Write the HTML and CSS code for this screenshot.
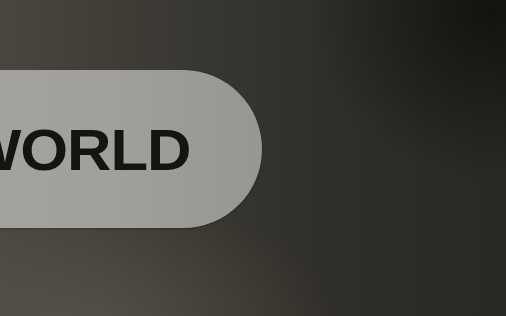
FILE: index.html
```html
<!DOCTYPE html>
<html>
<head>
<meta charset="utf-8">
<link rel="stylesheet" href="styles.css">
</head>
<body>
<div class="stage">
  <div class="pill"><span class="word">WORLD</span></div>
</div>
</body>
</html>
```
FILE: styles.css
```css
html, body {
  margin: 0;
  padding: 0;
  width: 506px;
  height: 316px;
  overflow: hidden;
}
body {
  background:
    radial-gradient(ellipse 180px 170px at 490px 10px, rgba(14,13,11,0.8), rgba(14,13,11,0) 100%),
    radial-gradient(ellipse 260px 140px at 80px 330px, rgba(95,90,80,0.65), rgba(95,90,80,0) 100%),
    linear-gradient(90deg, #48463f 0%, #3a3832 35%, #302e29 65%, #2a2823 100%);
}
.stage {
  display: flex;
  padding-top: 70px;
}
.pill {
  display: flex;
  align-items: center;
  justify-content: flex-end;
  box-sizing: border-box;
  width: 362px;
  height: 158px;
  margin-left: -100px;
  padding-right: 72px;
  border-radius: 0 79px 79px 0;
  background: linear-gradient(90deg, #a6a5a1 0%, #a19f9b 60%, #979694 100%);
  box-shadow: 0 1px 2px rgba(0,0,0,0.25);
}
.word {
  font-family: "Liberation Sans", Arial, sans-serif;
  font-weight: 700;
  font-size: 57px;
  letter-spacing: -1px;
  color: #141412;
  line-height: 1;
  transform: scaleX(1.08);
  transform-origin: right center;
  margin-top: 2px;
}
```
